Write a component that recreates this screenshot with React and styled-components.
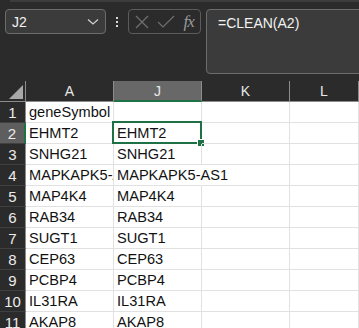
import React from "react";
import styled, { createGlobalStyle } from "styled-components";

const GlobalStyle = createGlobalStyle`
  body {
    margin: 0;
    background: #2b2b2b;
    font-family: "Liberation Sans", Arial, sans-serif;
    overflow: hidden;
  }
`;

const Window = styled.div`
  width: 359px;
  height: 328px;
  overflow: hidden;
  background: #2b2b2b;
`;

const TopStrip = styled.div`
  height: 2px;
  margin-left: 10px;
  background: #3c3c3c;
`;

const FormulaBar = styled.div`
  display: flex;
  align-items: flex-start;
  padding: 7px 0 0 5px;
  height: 79px;
  box-sizing: border-box;
`;

const NameBox = styled.div`
  width: 101px;
  height: 25px;
  box-sizing: border-box;
  border: 1px solid #6c6c6c;
  border-radius: 4px;
  background: #3b3b3b;
  display: flex;
  align-items: center;
  justify-content: space-between;
  padding: 0 6px 0 6px;
  color: #f2f2f2;
  font-size: 14px;
`;

const Dots = styled.div`
  width: 22px;
  height: 25px;
  display: flex;
  flex-direction: column;
  align-items: center;
  justify-content: center;
  gap: 2px;
`;

const Dot = styled.span`
  width: 2px;
  height: 2px;
  background: #d8d8d8;
`;

const IconBox = styled.div`
  width: 73px;
  height: 25px;
  box-sizing: border-box;
  border: 1px solid #5c5c5c;
  border-radius: 4px;
  display: flex;
  align-items: center;
  justify-content: space-around;
  padding: 0 2px;
`;

const Fx = styled.span`
  font-family: "Liberation Serif", "DejaVu Serif", serif;
  font-style: italic;
  font-size: 17px;
  color: #9a9a9a;
  letter-spacing: -1px;
`;

const Formula = styled.div`
  flex: 1;
  margin-left: 5px;
  margin-right: -10px;
  height: 65px;
  box-sizing: border-box;
  border: 1px solid #6c6c6c;
  border-radius: 4px;
  background: #3b3b3b;
  color: #f2f2f2;
  font-size: 14px;
  padding: 5px 0 0 11px;
`;

const Sheet = styled.div`
  display: grid;
  grid-template-columns: 26px 88px 88px 88px 1fr;
  grid-auto-rows: 21px;
  background: #ffffff;
`;

const Corner = styled.div`
  background: #2b2b2b;
  border-right: 1px solid #8c8c8c;
  border-bottom: 1px solid #8c8c8c;
  display: flex;
  align-items: flex-end;
  justify-content: flex-end;
  padding: 0 2px 2px 0;
`;

const ColHead = styled.div`
  background: ${({ active }) => (active ? "#686868" : "#2b2b2b")};
  border-right: 1px solid #8c8c8c;
  border-bottom: ${({ active }) => (active ? "2px solid #1e7145" : "1px solid #8c8c8c")};
  color: #e8e8e8;
  font-size: 14px;
  display: flex;
  align-items: center;
  justify-content: center;
`;

const RowHead = styled.div`
  background: ${({ active }) => (active ? "#5e5e5e" : "#2b2b2b")};
  border-right: ${({ active }) => (active ? "2px solid #1e7145" : "1px solid #8c8c8c")};
  border-bottom: 1px solid #404040;
  color: #ececec;
  font-size: 15px;
  display: flex;
  align-items: center;
  justify-content: center;
`;

const Cell = styled.div`
  position: relative;
  border-right: ${({ spill }) => (spill ? "1px solid transparent" : "1px solid #e1e1e1")};
  border-bottom: 1px solid #e1e1e1;
  color: #111111;
  font-size: 14.6px;
  line-height: 20px;
  padding-left: 3px;
  white-space: nowrap;
  overflow: ${({ spill, selected }) => (spill || selected ? "visible" : "hidden")};
`;

const Selection = styled.div`
  position: absolute;
  left: -2px;
  top: -2px;
  right: -1px;
  bottom: -1px;
  border: 2px solid #1e7145;
  pointer-events: none;
`;

const Handle = styled.div`
  position: absolute;
  right: -5px;
  bottom: -5px;
  width: 6px;
  height: 6px;
  background: #1e7145;
  border: 1px solid #ffffff;
`;

const Chevron = () => (
  <svg width="12" height="8" viewBox="0 0 12 8">
    <path d="M1 1.5 L6 6 L11 1.5" fill="none" stroke="#cfcfcf" strokeWidth="1.3" />
  </svg>
);

const Cross = () => (
  <svg width="14" height="14" viewBox="0 0 14 14">
    <path d="M1 1 L13 13 M13 1 L1 13" stroke="#6f6f6f" strokeWidth="1.2" />
  </svg>
);

const Check = () => (
  <svg width="18" height="14" viewBox="0 0 18 14">
    <path d="M1 7 L6 12 L17 1" fill="none" stroke="#6f6f6f" strokeWidth="1.2" />
  </svg>
);

const CornerMark = () => (
  <svg width="14" height="14" viewBox="0 0 14 14">
    <path d="M14 0 L14 14 L0 14 Z" fill="#a8a8a8" />
  </svg>
);

const rows = [
  ["geneSymbol", ""],
  ["EHMT2", "EHMT2"],
  ["SNHG21", "SNHG21"],
  ["MAPKAPK5-AS1", "MAPKAPK5-AS1"],
  ["MAP4K4", "MAP4K4"],
  ["RAB34", "RAB34"],
  ["SUGT1", "SUGT1"],
  ["CEP63", "CEP63"],
  ["PCBP4", "PCBP4"],
  ["IL31RA", "IL31RA"],
  ["AKAP8", "AKAP8"],
];

const App = () => {
  return (
    <Window>
      <GlobalStyle />
      <TopStrip />
      <FormulaBar>
        <NameBox>
          <span>J2</span>
          <Chevron />
        </NameBox>
        <Dots>
          <Dot />
          <Dot />
          <Dot />
        </Dots>
        <IconBox>
          <Cross />
          <Check />
          <Fx>fx</Fx>
        </IconBox>
        <Formula>=CLEAN(A2)</Formula>
      </FormulaBar>
      <Sheet>
        <Corner>
          <CornerMark />
        </Corner>
        <ColHead>A</ColHead>
        <ColHead active>J</ColHead>
        <ColHead>K</ColHead>
        <ColHead>L</ColHead>
        {rows.map((r, i) => {
          const n = i + 1;
          const spill = r[1].length > 10;
          const selected = n === 2;
          return (
            <React.Fragment key={n}>
              <RowHead active={selected}>{n}</RowHead>
              <Cell>{r[0]}</Cell>
              <Cell spill={spill} selected={selected}>
                {r[1]}
                {selected && (
                  <Selection>
                    <Handle />
                  </Selection>
                )}
              </Cell>
              <Cell />
              <Cell />
            </React.Fragment>
          );
        })}
      </Sheet>
    </Window>
  );
};

export default App;
